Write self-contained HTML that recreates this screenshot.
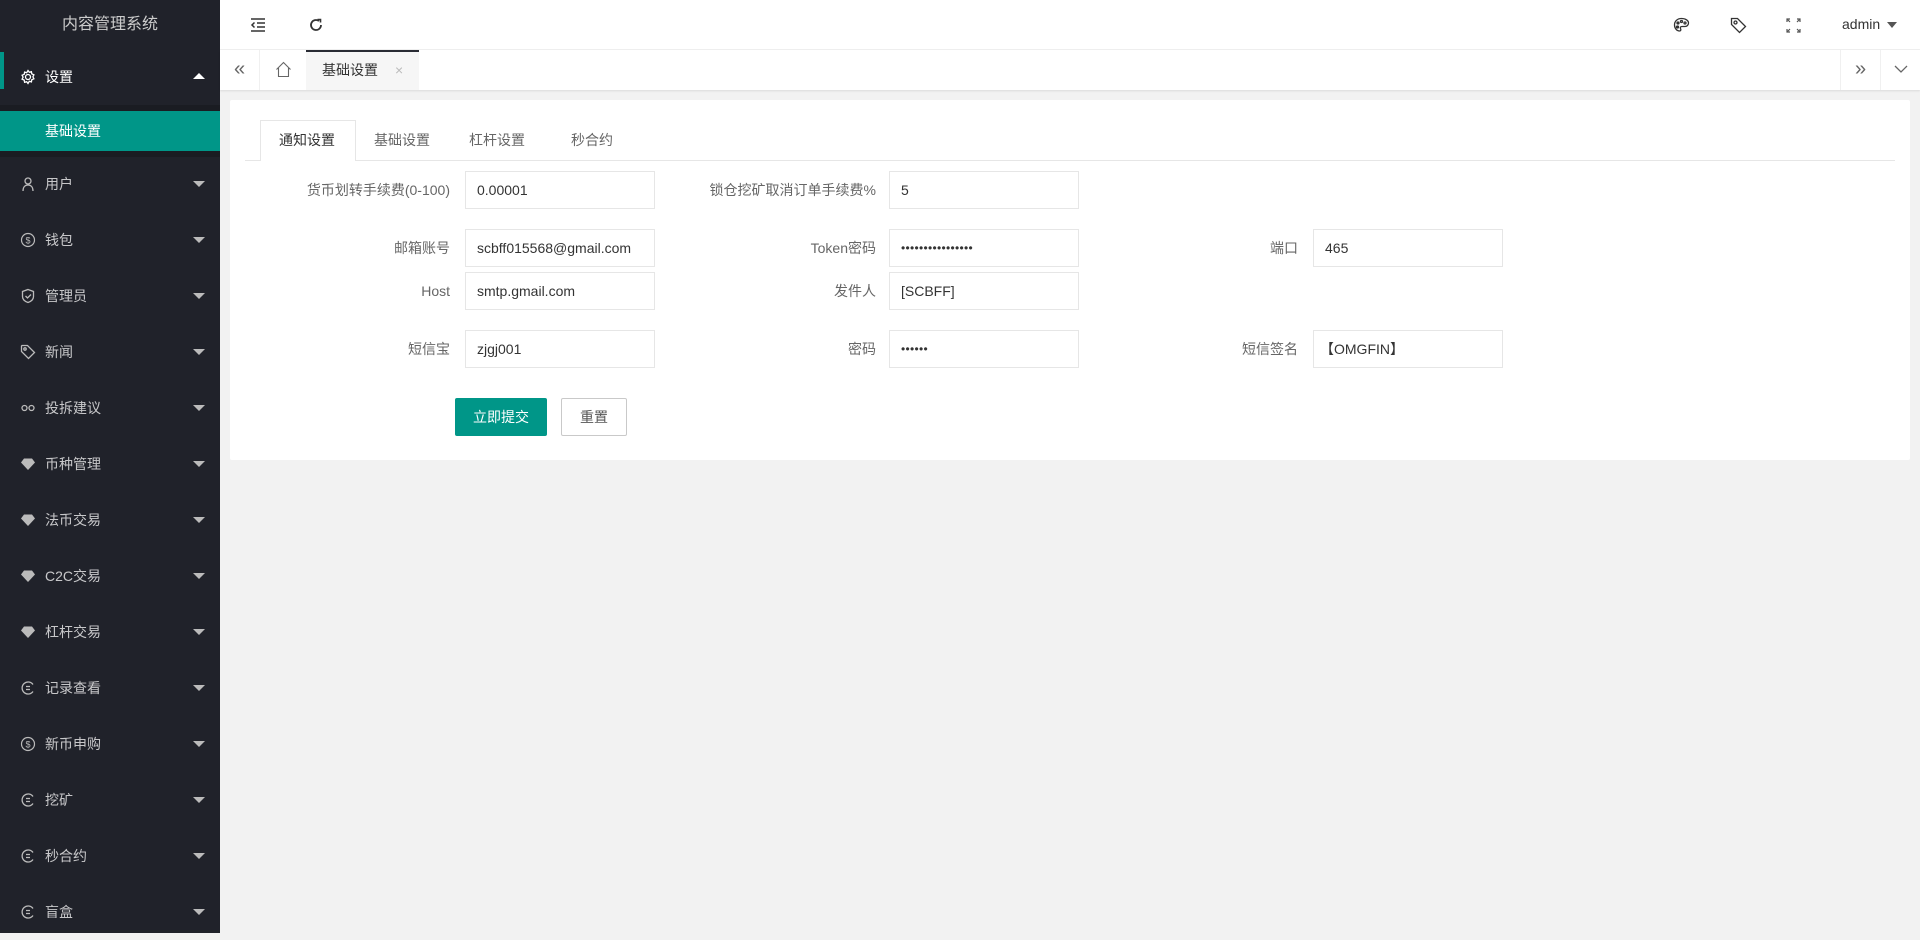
<!DOCTYPE html>
<html><head><meta charset="utf-8"><style>
*{margin:0;padding:0;box-sizing:border-box}
body{width:1920px;height:933px;overflow:hidden;background:#f2f2f2;font-family:"Liberation Sans","Noto Sans CJK SC",sans-serif;font-size:14px;color:#333;position:relative}
.side{position:absolute;left:0;top:0;width:220px;height:933px;background:#20222a}
.logo{height:50px;line-height:50px;text-align:center;color:#ccc;font-size:16px}
.mi{position:absolute;left:0;width:220px;height:56px;line-height:56px;color:rgba(255,255,255,.75);font-size:14px}
.mi .ic{position:absolute;left:20px;top:20px;width:16px;height:16px}
.mi .t{position:absolute;left:45px}
.mi .c{position:absolute;left:193px;top:25px;width:0;height:0;border-left:6px solid transparent;border-right:6px solid transparent;border-top:6px solid #bbb}
.mi .c.up{border-top:none;border-bottom:6px solid #fff;top:24px}
.sub{position:absolute;left:0;top:111px;width:220px;height:40px;background:#009688;color:#fff;line-height:40px;padding-left:45px}
.subbg{position:absolute;left:0;top:105px;width:220px;height:52px;background:#1a1c22}
.hdr{position:absolute;left:220px;top:0;right:0;height:50px;background:#fff;border-bottom:1px solid #f0f0f0}
.tabs{position:absolute;left:220px;top:50px;right:0;height:40px;background:#fff;box-shadow:0 1px 2px rgba(0,0,0,.1)}
.card{position:absolute;left:230px;top:100px;width:1680px;height:360px;background:#fff;border-radius:2px}
.lab{position:absolute;text-align:right;color:#666;font-size:14px;line-height:38px}
.inp{position:absolute;width:190px;height:38px;border:1px solid #e6e6e6;line-height:36px;padding-left:11px;font-size:14px;color:#333;background:#fff}
.pw{font-size:12px;letter-spacing:0.3px}
.tb{position:absolute;top:120px;height:40px;line-height:40px;font-size:14px;color:#666}
</style></head><body>
<div class="side">
<div class="logo">内容管理系统</div>
<div style="position:absolute;left:0;top:52px;width:4px;height:37px;background:#009688"></div>
<div class="mi" style="top:49px;color:#fff"><svg class="ic" viewBox="0 0 16 16" fill="none" stroke="#fff" stroke-width="1.3"><circle cx="8" cy="8" r="2.5"/><path d="M8 1.5l1.3 1.8 2.1-.6.4 2.2 2.1.9-1 2 1 2-2.1.9-.4 2.2-2.1-.6L8 14.5l-1.3-1.8-2.1.6-.4-2.2-2.1-.9 1-2-1-2 2.1-.9.4-2.2 2.1.6z"/></svg><span class="t">设置</span><span class="c up"></span></div>
<div class="subbg"></div>
<div class="sub">基础设置</div>
<div class="mi" style="top:156px"><svg class="ic" viewBox="0 0 16 16" fill="none" stroke="#bbb" stroke-width="1.3"><circle cx="8" cy="5" r="3"/><path d="M3 15c0-4 2-6 5-6s5 2 5 6"/></svg><span class="t">用户</span><span class="c"></span></div>
<div class="mi" style="top:212px"><svg class="ic" viewBox="0 0 16 16" fill="none" stroke="#bbb" stroke-width="1.2"><circle cx="8" cy="8" r="6.5"/><text x="8" y="11.5" font-size="9" text-anchor="middle" fill="#bbb" stroke="none">$</text></svg><span class="t">钱包</span><span class="c"></span></div>
<div class="mi" style="top:268px"><svg class="ic" viewBox="0 0 16 16" fill="none" stroke="#bbb" stroke-width="1.3"><path d="M8 1.5l5.5 2v5c0 3-2.5 5-5.5 6-3-1-5.5-3-5.5-6v-5z"/><path d="M5.5 8l2 2 3.5-3.5"/></svg><span class="t">管理员</span><span class="c"></span></div>
<div class="mi" style="top:324px"><svg class="ic" viewBox="0 0 16 16" fill="none" stroke="#bbb" stroke-width="1.3"><path d="M1.5 2v5.5l7 7 6-6-7-7H2z"/><circle cx="5" cy="5" r="1.2"/></svg><span class="t">新闻</span><span class="c"></span></div>
<div class="mi" style="top:380px"><svg class="ic" viewBox="0 0 16 16" fill="none" stroke="#bbb" stroke-width="1.3"><circle cx="4.5" cy="8" r="2.5"/><circle cx="11.5" cy="8" r="2.5"/></svg><span class="t">投拆建议</span><span class="c"></span></div>
<div class="mi" style="top:436px"><svg class="ic" viewBox="0 0 16 16" fill="#bbb"><path d="M4 2.5h8l3 4-7 7.5-7-7.5z"/></svg><span class="t">币种管理</span><span class="c"></span></div>
<div class="mi" style="top:492px"><svg class="ic" viewBox="0 0 16 16" fill="#bbb"><path d="M4 2.5h8l3 4-7 7.5-7-7.5z"/></svg><span class="t">法币交易</span><span class="c"></span></div>
<div class="mi" style="top:548px"><svg class="ic" viewBox="0 0 16 16" fill="#bbb"><path d="M4 2.5h8l3 4-7 7.5-7-7.5z"/></svg><span class="t">C2C交易</span><span class="c"></span></div>
<div class="mi" style="top:604px"><svg class="ic" viewBox="0 0 16 16" fill="#bbb"><path d="M4 2.5h8l3 4-7 7.5-7-7.5z"/></svg><span class="t">杠杆交易</span><span class="c"></span></div>
<div class="mi" style="top:660px"><svg class="ic" viewBox="0 0 16 16" fill="none" stroke="#bbb" stroke-width="1.3"><path d="M13 4.5A6 6 0 1 0 13 11.5"/><path d="M6 6.5h4M6 9.5h4"/></svg><span class="t">记录查看</span><span class="c"></span></div>
<div class="mi" style="top:716px"><svg class="ic" viewBox="0 0 16 16" fill="none" stroke="#bbb" stroke-width="1.2"><circle cx="8" cy="8" r="6.5"/><text x="8" y="11.5" font-size="9" text-anchor="middle" fill="#bbb" stroke="none">$</text></svg><span class="t">新币申购</span><span class="c"></span></div>
<div class="mi" style="top:772px"><svg class="ic" viewBox="0 0 16 16" fill="none" stroke="#bbb" stroke-width="1.3"><path d="M13 4.5A6 6 0 1 0 13 11.5"/><path d="M6 6.5h4M6 9.5h4"/></svg><span class="t">挖矿</span><span class="c"></span></div>
<div class="mi" style="top:828px"><svg class="ic" viewBox="0 0 16 16" fill="none" stroke="#bbb" stroke-width="1.3"><path d="M13 4.5A6 6 0 1 0 13 11.5"/><path d="M6 6.5h4M6 9.5h4"/></svg><span class="t">秒合约</span><span class="c"></span></div>
<div class="mi" style="top:884px"><svg class="ic" viewBox="0 0 16 16" fill="none" stroke="#bbb" stroke-width="1.3"><path d="M13 4.5A6 6 0 1 0 13 11.5"/><path d="M6 6.5h4M6 9.5h4"/></svg><span class="t">盲盒</span><span class="c"></span></div>
</div>

<div class="hdr">
<svg style="position:absolute;left:30px;top:18px" width="16" height="14" viewBox="0 0 16 14" fill="none" stroke="#333" stroke-width="1.5"><path d="M1 1h14M7 5h8M7 9h8M1 13h14M4.5 4.5L2 7l2.5 2.5"/></svg>
<svg style="position:absolute;left:88px;top:17px" width="16" height="16" viewBox="0 0 16 16" fill="none" stroke="#333" stroke-width="1.8"><path d="M13 8A5 5 0 1 1 11 4"/><path d="M9.5 2.5h3v3" stroke-width="1.6"/></svg>
<svg style="position:absolute;left:1453px;top:17px" width="17" height="16" viewBox="0 0 17 16" fill="none" stroke="#333" stroke-width="1.3"><path d="M8.5 1.5C4 1.5 1.5 4.5 1.5 8c0 3.5 2.5 6 5 6 1.5 0 1.5-1.5 1-2.5s0-2 1.5-2h3c2 0 3.5-1.5 3.5-3.5 0-2.5-3-4.5-7-4.5z"/><circle cx="5" cy="6" r="1" fill="#333"/><circle cx="8.5" cy="4.5" r="1"/><circle cx="12" cy="6" r="1"/><circle cx="4.5" cy="10" r="1" fill="#333"/></svg>
<svg style="position:absolute;left:1510px;top:17px" width="17" height="17" viewBox="0 0 17 17" fill="none" stroke="#333" stroke-width="1.3"><path d="M1.5 1.5v6l8 8 6-6-8-8z"/><circle cx="5.5" cy="5.5" r="1.5"/></svg>
<svg style="position:absolute;left:1566px;top:18px" width="15" height="15" viewBox="0 0 15 15" fill="none" stroke="#555" stroke-width="1.2"><path d="M1 4V1h3M11 1h3v3M14 11v3h-3M4 14H1v-3M1 1l3 3M14 1l-3 3M14 14l-3-3M1 14l3-3"/></svg>
<span style="position:absolute;left:1622px;top:16px;font-size:14px;color:#333">admin</span>
<span style="position:absolute;left:1667px;top:22px;border-left:5px solid transparent;border-right:5px solid transparent;border-top:6px solid #555"></span>
</div>

<div class="tabs">
<div style="position:absolute;left:0;top:0;width:40px;height:40px;border-right:1px solid #f0f0f0;text-align:center;line-height:38px;font-size:20px;color:#666">«</div>
<svg style="position:absolute;left:55px;top:11px" width="17" height="17" viewBox="0 0 17 17" fill="none" stroke="#666" stroke-width="1.1"><path d="M1.5 8.5L8.5 1.5l7 7M3.5 7v8.5h10V7"/></svg>
<div style="position:absolute;left:86px;top:0;width:113px;height:40px;background:#f6f6f6;border-top:2px solid #292b34;line-height:36px;padding-left:16px;font-size:14px;color:#333">基础设置<span style="position:absolute;left:89px;color:#bbb;font-size:14px">×</span></div>
<div style="position:absolute;right:40px;top:0;width:40px;height:40px;border-left:1px solid #f0f0f0;text-align:center;line-height:38px;font-size:20px;color:#666">»</div>
<div style="position:absolute;right:0;top:0;width:40px;height:40px;border-left:1px solid #f0f0f0"><svg style="position:absolute;left:13px;top:15px" width="14" height="9" viewBox="0 0 14 9" fill="none" stroke="#666" stroke-width="1.3"><path d="M1 1l6 6 6-6"/></svg></div>
</div>

<div class="card"></div>
<div style="position:absolute;left:245px;top:160px;width:1650px;height:1px;background:#e6e6e6"></div>
<div style="position:absolute;left:260px;top:120px;width:96px;height:41px;background:#fff;border:1px solid #e6e6e6;border-bottom:none"></div>
<div class="tb" style="left:279px;color:#333">通知设置</div>
<div class="tb" style="left:374px">基础设置</div>
<div class="tb" style="left:469px">杠杆设置</div>
<div class="tb" style="left:571px">秒合约</div>

<div class="lab" style="left:240px;width:210px;top:171px">货币划转手续费(0-100)</div>
<div class="inp" style="left:465px;top:171px">0.00001</div>
<div class="lab" style="left:660px;width:216px;top:171px">锁仓挖矿取消订单手续费%</div>
<div class="inp" style="left:889px;top:171px">5</div>

<div class="lab" style="left:240px;width:210px;top:229px">邮箱账号</div>
<div class="inp" style="left:465px;top:229px">scbff015568@gmail.com</div>
<div class="lab" style="left:660px;width:216px;top:229px">Token密码</div>
<div class="inp pw" style="left:889px;top:229px">••••••••••••••••</div>
<div class="lab" style="left:1100px;width:198px;top:229px">端口</div>
<div class="inp" style="left:1313px;top:229px">465</div>

<div class="lab" style="left:240px;width:210px;top:272px">Host</div>
<div class="inp" style="left:465px;top:272px">smtp.gmail.com</div>
<div class="lab" style="left:660px;width:216px;top:272px">发件人</div>
<div class="inp" style="left:889px;top:272px">[SCBFF]</div>

<div class="lab" style="left:240px;width:210px;top:330px">短信宝</div>
<div class="inp" style="left:465px;top:330px">zjgj001</div>
<div class="lab" style="left:660px;width:216px;top:330px">密码</div>
<div class="inp pw" style="left:889px;top:330px">••••••</div>
<div class="lab" style="left:1100px;width:198px;top:330px">短信签名</div>
<div class="inp" style="left:1313px;top:330px;padding-left:6px">【OMGFIN】</div>

<div style="position:absolute;left:455px;top:398px;width:92px;height:38px;background:#009688;color:#fff;text-align:center;line-height:38px;border-radius:2px;font-size:14px">立即提交</div>
<div style="position:absolute;left:561px;top:398px;width:66px;height:38px;background:#fff;border:1px solid #c9c9c9;color:#555;text-align:center;line-height:36px;border-radius:2px;font-size:14px">重置</div>
</body></html>
